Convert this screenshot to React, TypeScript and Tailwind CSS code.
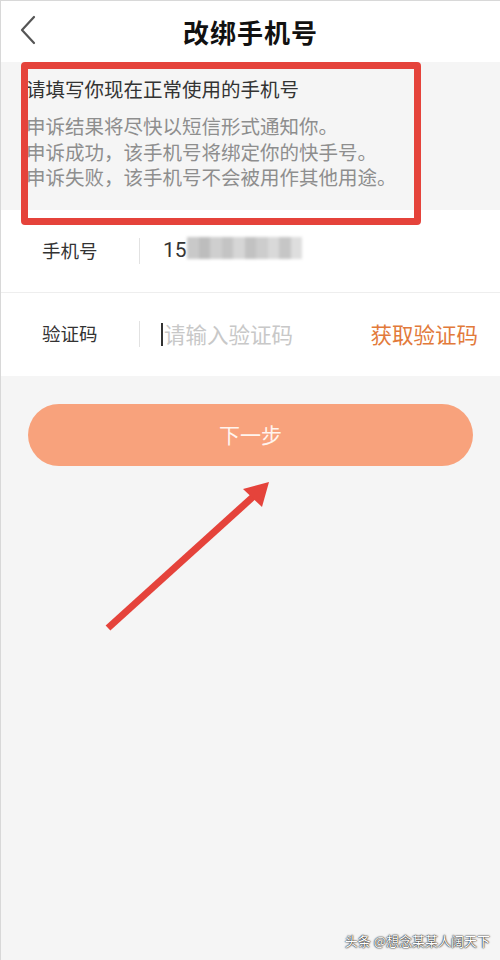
import React from "react";

const cjk = "font-['Noto_Sans_CJK_SC','Noto_Sans',sans-serif]";

// pixelated blur covering the phone number
const maskCells = ["#c9c9c9", "#bdbdbd", "#cfcfcf", "#c4c4c4", "#d6d6d6", "#c2c2c2", "#cdcdcd", "#d9d9d9", "#c6c6c6", "#dedede"];

function BackIcon() {
  return (
    <svg width="18" height="30" viewBox="0 0 18 30" fill="none">
      <path d="M15 2 L3 15 L15 28" stroke="#555" strokeWidth="2.2" strokeLinecap="round" strokeLinejoin="round" />
    </svg>
  );
}

function Arrow() {
  return (
    <svg className="absolute left-0 top-0 pointer-events-none" width="500" height="960" viewBox="0 0 500 960">
      <line x1="107" y1="627" x2="254" y2="494" stroke="#e5433b" strokeWidth="7" />
      <polygon points="268,481 242,488 261,506" fill="#e5433b" />
    </svg>
  );
}

export default function App() {
  return (
    <div className={`relative w-[500px] h-[960px] overflow-hidden bg-[#f5f5f5] border-t border-l border-[#d8d8d8] ${cjk}`}>
      {/* Header */}
      <header className="relative h-[61px] bg-white flex items-center justify-center">
        <div className="absolute left-[18px] top-[14px]">
          <BackIcon />
        </div>
        <h1 className="text-[26px] font-bold tracking-[1px] text-[#111]">改绑手机号</h1>
      </header>

      {/* Notice */}
      <section className="pl-[25px] pt-[14px] pb-[20px]">
        <p className="text-[19.5px] leading-[26px] text-[#333]">请填写你现在正常使用的手机号</p>
        <div className="mt-[11px] text-[19.5px] leading-[25.5px] text-[#8e8e8e]">
          <p>申诉结果将尽快以短信形式通知你。</p>
          <p>申诉成功，该手机号将绑定你的快手号。</p>
          <p>申诉失败，该手机号不会被用作其他用途。</p>
        </div>
      </section>

      {/* Form rows */}
      <div className="bg-white">
        <div className="h-[83px] flex items-center border-b border-[#eeeeee]">
          <span className="w-[138px] pl-[41px] text-[18.5px] text-[#333]">手机号</span>
          <span className="h-[26px] w-px bg-[#e2e2e2]" />
          <div className="relative ml-[23px] flex items-center">
            <span className="text-[21px] text-[#333] font-['Roboto',sans-serif]">15</span>
            <div className="absolute left-[24px] top-[2px] flex h-[22px] blur-[1.5px]">
              {maskCells.map((c, i) => (
                <span key={i} className="h-full w-[11.5px]" style={{ backgroundColor: c }} />
              ))}
            </div>
          </div>
        </div>
        <div className="h-[83px] flex items-center">
          <span className="w-[138px] pl-[41px] text-[18.5px] text-[#333]">验证码</span>
          <span className="h-[26px] w-px bg-[#e2e2e2]" />
          <span className="ml-[21px] h-[23px] w-[2px] bg-[#333]" />
          <span className="ml-[1px] text-[21.5px] text-[#c8c8c8]">请输入验证码</span>
          <span className="ml-auto mr-[22px] text-[21.5px] text-[#e27a3a]">获取验证码</span>
        </div>
      </div>

      {/* Next button */}
      <div className="px-[27px] pt-[28px]">
        <button className="w-full h-[62px] rounded-full bg-[#f8a27c] text-[21px] text-[#fff4ee]">下一步</button>
      </div>

      {/* Annotation box */}
      <div className="absolute left-[20px] top-[61px] w-[400px] h-[163px] border-[7px] border-[#e5433b] rounded-[4px] pointer-events-none" />
      <Arrow />

      {/* Watermark */}
      <div className="absolute right-[10px] bottom-[10px] text-[13px] text-white [text-shadow:0_0_2px_#000,0_0_1px_#000]">
        头条 @想念某某人阔天下
      </div>
    </div>
  );
}
